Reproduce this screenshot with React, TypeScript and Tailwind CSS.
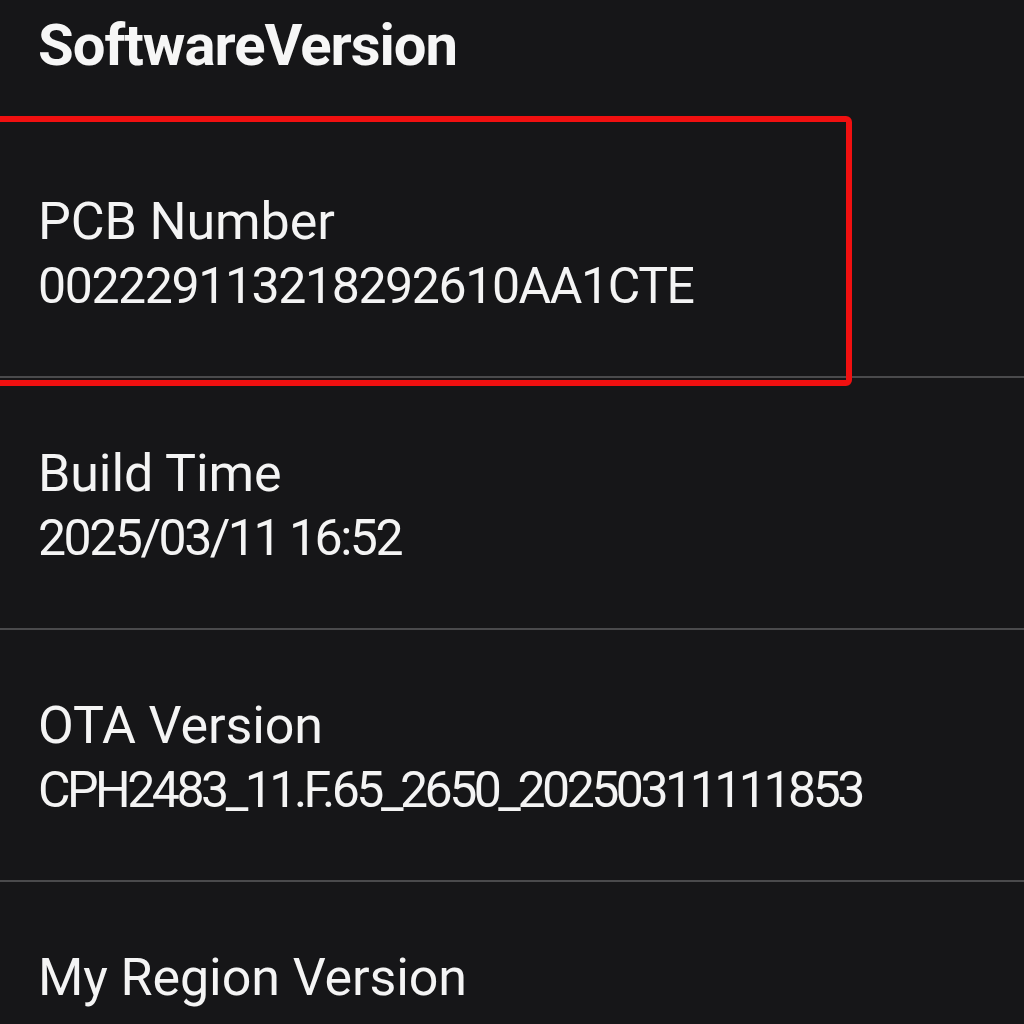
const rows = [
  { label: "PCB Number", value: "002229113218292610AA1CTE", track: "tracking-[-1.4px]" },
  { label: "Build Time", value: "2025/03/11 16:52", track: "tracking-[-2.5px]" },
  { label: "OTA Version", value: "CPH2483_11.F.65_2650_20250311111853", track: "tracking-[-3.5px]" },
];

function InfoRow({ label, value, track }: { label: string; value?: string; track?: string }) {
  return (
    <div className="pl-[38px] pt-[64px] pb-[58px] border-b-2 border-[#4a4a4c]">
      <div className="text-[52px] leading-[64px] text-[#f4f4f4] tracking-[-0.1px]">
        {label}
      </div>
      {value && (
        <div className={`text-[50px] leading-[64px] text-[#f4f4f4] ${track}`}>
          {value}
        </div>
      )}
    </div>
  );
}

export default function App() {
  return (
    <div
      className="relative w-[1024px] h-[1024px] overflow-hidden bg-[#161618]"
      style={{ fontFamily: "Roboto, 'Noto Sans', sans-serif" }}
    >
      <div className="h-[126px] pl-[38px] pt-[10px]">
        <h1 className="text-[58px] leading-[70px] font-bold text-[#f6f6f6] tracking-[-1px]">
          SoftwareVersion
        </h1>
      </div>

      {rows.map((r) => (
        <InfoRow key={r.label} label={r.label} value={r.value} track={r.track} />
      ))}
      <InfoRow label="My Region Version" />

      {/* annotation box */}
      <div className="absolute left-[-12px] top-[116px] w-[864px] h-[270px] border-[6px] border-[#f01010] rounded-[6px]" />
    </div>
  );
}
